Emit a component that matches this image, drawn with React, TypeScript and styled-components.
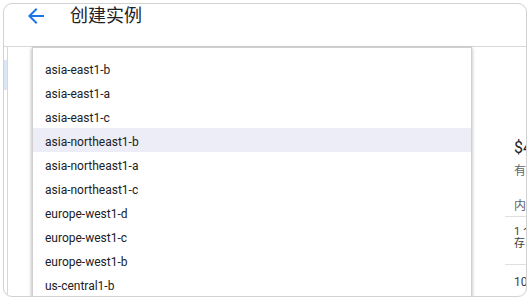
import * as React from 'react'
import styled, { createGlobalStyle } from 'styled-components'

const zones = [
  'asia-east1-b',
  'asia-east1-a',
  'asia-east1-c',
  'asia-northeast1-b',
  'asia-northeast1-a',
  'asia-northeast1-c',
  'europe-west1-d',
  'europe-west1-c',
  'europe-west1-b',
  'us-central1-b',
  'us-central1-c',
  'us-central1-f',
]

const App = () => {
  return (
    <>
      <GlobalStyle />
      <Frame>
        <Header>
          <BackButton aria-label="返回">
            <svg width="24" height="24" viewBox="0 0 24 24">
              <path
                fill="currentColor"
                d="M20 11H7.83l5.59-5.59L12 4l-8 8 8 8 1.41-1.41L7.83 13H20v-2z"
              />
            </svg>
          </BackButton>
          <Title>创建实例</Title>
        </Header>
        <Body>
          <Sidebar>
            <NavActive />
          </Sidebar>
          <Main>
            <Menu>
              {zones.map((zone) => (
                <MenuItem key={zone} $active={zone === 'asia-northeast1-b'}>
                  {zone}
                </MenuItem>
              ))}
            </Menu>
          </Main>
          <Summary>
            <Price>$48.55 每月预计费用</Price>
            <Note>有效每小时费率为 $0.067</Note>
            <CostRow $head>内容 每月预计费用</CostRow>
            <CostRow>
              <CostLine>1 个 vCPU + 3.75 GB 内</CostLine>
              <CostLine>存</CostLine>
            </CostRow>
            <CostRow $last>
              <CostLine $size={12}>10 GB 标准永久性磁盘</CostLine>
            </CostRow>
          </Summary>
        </Body>
      </Frame>
    </>
  )
}

export default App

// Styles

const GlobalStyle = createGlobalStyle`
  html, body {
    margin: 0;
    padding: 0;
    background: #fff;
  }
  body {
    padding: 3px;
    font-family: Roboto, "Noto Sans CJK SC", sans-serif;
    color: #202124;
  }
`

const Frame = styled.div`
  width: 524px;
  height: 294px;
  box-sizing: border-box;
  border: 1px solid #d2d2d2;
  border-radius: 9px;
  overflow: hidden;
  display: flex;
  flex-direction: column;
`

const Header = styled.header`
  flex: 0 0 42px;
  display: flex;
  align-items: flex-start;
  gap: 22px;
  padding-left: 20px;
  border-bottom: 1px solid #d8d8d8;
`

const BackButton = styled.span`
  display: flex;
  width: 24px;
  height: 24px;
  color: #1a73e8;
`

const Title = styled.h1`
  margin: 0;
  font-size: 18px;
  line-height: 23px;
  font-weight: 400;
  color: #202124;
`

const Body = styled.div`
  flex: 1;
  display: flex;
  min-height: 0;
`

const Sidebar = styled.nav`
  flex: 0 0 3px;
  border-right: 1px solid #d8d8d8;
  padding-top: 13px;
`

const NavActive = styled.div`
  height: 30px;
  background: #dbe5f5;
`

const Main = styled.main`
  flex: 1;
  position: relative;
`

const Menu = styled.ul`
  position: absolute;
  top: 0;
  left: 24px;
  right: 0;
  margin: 0;
  padding: 8px 0;
  list-style: none;
  background: #fff;
  border: 1px solid #d0d0d0;
  box-shadow: -1px 1px 3px rgba(0, 0, 0, 0.2), 1px 1px 3px rgba(0, 0, 0, 0.15);
`

const MenuItem = styled.li<{ $active?: boolean }>`
  height: 22px;
  padding: 2px 12px 0;
  line-height: 24px;
  font-size: 12px;
  color: #202124;
  background: ${(p) => (p.$active ? '#ededf7' : 'transparent')};
`

const Summary = styled.aside`
  flex: 0 0 54px;
  min-width: 0;
  overflow: hidden;
  padding: 91px 0 0 33px;
  box-sizing: border-box;
  white-space: nowrap;
`

const Price = styled.div`
  padding-left: 9px;
  font-size: 16px;
  line-height: 20px;
  color: #202124;
`

const Note = styled.div`
  margin: 4px 0 16px;
  padding-left: 9px;
  font-size: 12px;
  line-height: 18px;
  color: #5f6368;
`

const CostRow = styled.div<{ $head?: boolean; $last?: boolean }>`
  padding: ${(p) => (p.$head ? '1px 0 1px 9px' : p.$last ? '11px 0 12px 9px' : '9px 0 14px 9px')};
  font-size: 12px;
  line-height: 18px;
  color: ${(p) => (p.$head ? '#5f6368' : '#3c4043')};
  border-bottom: ${(p) => (p.$last ? 'none' : '1px solid #e0e0e0')};
`

const CostLine = styled.div<{ $size?: number }>`
  font-size: ${(p) => p.$size ?? 11}px;
  line-height: 12px;
`
